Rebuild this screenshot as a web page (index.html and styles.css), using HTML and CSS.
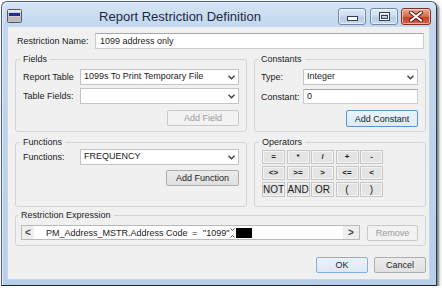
FILE: index.html
```html
<!DOCTYPE html>
<html lang="en">
<head>
    <meta charset="utf-8">
    <title>Report Restriction Definition</title>
    <link rel="stylesheet" href="styles.css">
</head>
<body>
    <div class="window">
        <div class="titlebar">
            <svg class="app-icon" width="15" height="14" viewBox="0 0 15 14">
                <rect x="0.5" y="0.5" width="14" height="13" rx="1" fill="#cfcfcf" stroke="#55595f"/>
                <rect x="1" y="1" width="13" height="2" fill="#e9e9e9"/>
                <rect x="2" y="4" width="11" height="3" fill="#1d2f9e"/>
                <rect x="1" y="8" width="13" height="5" fill="#bdbdbd"/>
            </svg>
            <div class="title">Report Restriction Definition</div>
            <div class="caption-buttons">
                <span class="cap-btn cap-min">
                    <svg width="11" height="5" viewBox="0 0 11 5"><rect x="0.5" y="0.5" width="10" height="4" fill="#ffffff" stroke="#2f405a"/></svg>
                </span>
                <span class="cap-btn cap-max">
                    <svg width="11" height="9" viewBox="0 0 11 9"><rect x="0.5" y="0.5" width="10" height="8" fill="none" stroke="#2f405a"/><rect x="1.5" y="1.5" width="8" height="6" fill="none" stroke="#ffffff"/><rect x="2.5" y="3.5" width="6" height="3" fill="none" stroke="#2f405a"/></svg>
                </span>
                <span class="cap-btn cap-close">
                    <svg width="14" height="11" viewBox="0 0 14 11"><path d="M2 1.5 L12 9.5 M12 1.5 L2 9.5" stroke="#4a1710" stroke-width="4" stroke-linecap="round"/><path d="M2 1.5 L12 9.5 M12 1.5 L2 9.5" stroke="#ffffff" stroke-width="2.2" stroke-linecap="round"/></svg>
                </span>
            </div>
        </div>

        <div class="client">
            <div class="name-row">
                <label>Restriction Name:</label>
                <div class="textbox name-box">1099 address only</div>
            </div>

            <div class="groups">
                <fieldset class="group fields-group">
                    <legend>Fields</legend>
                    <div class="form-row">
                        <label>Report Table</label>
                        <div class="combo">
                            <span>1099s To Print Temporary File</span>
                            <svg class="chev" width="7" height="5" viewBox="0 0 7 5"><path d="M0.5 0.8 L3.5 3.8 L6.5 0.8" fill="none" stroke="#3a3a3a" stroke-width="1.3"/></svg>
                        </div>
                    </div>
                    <div class="form-row">
                        <label>Table Fields:</label>
                        <div class="combo">
                            <span></span>
                            <svg class="chev" width="7" height="5" viewBox="0 0 7 5"><path d="M0.5 0.8 L3.5 3.8 L6.5 0.8" fill="none" stroke="#3a3a3a" stroke-width="1.3"/></svg>
                        </div>
                    </div>
                    <div class="btn-row">
                        <button class="btn disabled add-btn">Add Field</button>
                    </div>
                </fieldset>

                <fieldset class="group constants-group">
                    <legend>Constants</legend>
                    <div class="form-row">
                        <label>Type:</label>
                        <div class="combo">
                            <span>Integer</span>
                            <svg class="chev" width="7" height="5" viewBox="0 0 7 5"><path d="M0.5 0.8 L3.5 3.8 L6.5 0.8" fill="none" stroke="#3a3a3a" stroke-width="1.3"/></svg>
                        </div>
                    </div>
                    <div class="form-row">
                        <label>Constant:</label>
                        <div class="textbox const-box">0</div>
                    </div>
                    <div class="btn-row">
                        <button class="btn focused add-btn">Add Constant</button>
                    </div>
                </fieldset>

                <fieldset class="group functions-group">
                    <legend>Functions</legend>
                    <div class="form-row">
                        <label>Functions:</label>
                        <div class="combo">
                            <span>FREQUENCY</span>
                            <svg class="chev" width="7" height="5" viewBox="0 0 7 5"><path d="M0.5 0.8 L3.5 3.8 L6.5 0.8" fill="none" stroke="#3a3a3a" stroke-width="1.3"/></svg>
                        </div>
                    </div>
                    <div class="btn-row">
                        <button class="btn add-btn fn-btn">Add Function</button>
                    </div>
                </fieldset>

                <fieldset class="group operators-group">
                    <legend>Operators</legend>
                    <div class="op-grid">
                        <button class="op sym">=</button>
                        <button class="op sym">*</button>
                        <button class="op sym">/</button>
                        <button class="op sym">+</button>
                        <button class="op sym">-</button>
                        <button class="op sym">&lt;&gt;</button>
                        <button class="op sym">&gt;=</button>
                        <button class="op sym">&gt;</button>
                        <button class="op sym">&lt;=</button>
                        <button class="op sym">&lt;</button>
                        <button class="op">NOT</button>
                        <button class="op">AND</button>
                        <button class="op">OR</button>
                        <button class="op">(</button>
                        <button class="op">)</button>
                    </div>
                </fieldset>
            </div>

            <fieldset class="group expr-group">
                <legend>Restriction Expression</legend>
                <div class="expr-row">
                    <div class="expr-field">
                        <span class="scroll-arrow left">&lt;</span>
                        <div class="expr-text">
                            <span class="expr-col">PM_Address_MSTR.Address Code</span>
                            <span class="expr-op">=</span>
                            <span class="expr-val">"1099"</span>
                            <svg class="caret-mark" width="5" height="10" viewBox="0 0 5 10"><path d="M0.5 0.5 L2.5 2.5 L4.5 0.5 M0.5 9.5 L2.5 7.5 L4.5 9.5" fill="none" stroke="#555" stroke-width="1"/></svg>
                            <span class="expr-block"></span>
                        </div>
                        <span class="scroll-arrow right">&gt;</span>
                    </div>
                    <button class="btn disabled remove-btn">Remove</button>
                </div>
            </fieldset>

            <div class="dialog-buttons">
                <button class="btn default dlg-btn">OK</button>
                <button class="btn dlg-btn">Cancel</button>
            </div>
        </div>
    </div>
</body>
</html>
```

FILE: styles.css
```css
* {
    box-sizing: border-box;
}
body {
    margin: 0;
    background-color: #ffffff;
    font-family: "Liberation Sans", Arial, sans-serif;
    font-size: 9px;
    color: #1b1b1b;
}

/* window frame */
.window {
    width: 436px;
    height: 285px;
    margin: 1px 0 0 1px;
    padding: 0 6px 5px 5px;
    display: flex;
    flex-direction: column;
    border: 1px solid #4b5e78;
    border-right-color: #2a394d;
    border-bottom-color: #18212c;
    border-radius: 6px 6px 0 0;
    background: linear-gradient(#d5e4f5, #c2d7ee 24px, #b8cfe9);
    box-shadow: 2px 2px 3px rgba(0, 0, 0, 0.55), inset 1px 1px 0 #e6eff9;
}
.titlebar {
    height: 24px;
    flex-shrink: 0;
    display: flex;
}
.app-icon {
    margin: 7px 0 0 0;
}
.title {
    flex: 1;
    text-align: center;
    padding-top: 7px;
    font-size: 13px;
    line-height: 15px;
    color: #1c2a3c;
}
.caption-buttons {
    display: flex;
    margin: 6px -1px 0 0;
}
.cap-btn {
    width: 28px;
    height: 17px;
    display: flex;
    align-items: center;
    justify-content: center;
    border: 1px solid #7088a8;
    border-radius: 3px;
    background: linear-gradient(#e2ecf7, #c9daef 50%, #b3c9e4 51%, #c8daee);
    box-shadow: inset 0 0 0 1px rgba(255, 255, 255, 0.55);
}
.cap-min svg {
    margin-top: 4px;
}
.cap-max {
    margin-left: 4px;
}
.cap-close {
    width: 30px;
    margin-left: 3px;
    border-color: #80301f;
    background: linear-gradient(#eba996, #d76a51 50%, #c53c22 51%, #d4654c);
}

/* client area */
.client {
    flex: 1;
    display: flex;
    flex-direction: column;
    padding: 6px 3px 0 7px;
    background-color: #f0f0f0;
    border: 1px solid #c7d6e8;
}
.name-row {
    display: flex;
    align-items: center;
    height: 16px;
    margin-bottom: 5px;
}
.name-row label {
    width: 80px;
    padding-left: 2px;
}
.textbox {
    height: 16px;
    padding: 0 4px;
    line-height: 14px;
    background-color: #ffffff;
    border: 1px solid #c9ccd0;
    border-top-color: #a3a7ac;
}
.name-box {
    width: 329px;
}

.groups {
    display: grid;
    grid-template-columns: 232px 172px;
    column-gap: 7px;
    row-gap: 5px;
}
.group {
    margin: 0;
    min-width: 0;
    padding: 4px 7px 5px 7px;
    border: 1px solid #d0d4d8;
    border-radius: 3px;
}
.group legend {
    margin-left: -3px;
    padding: 0 3px;
    line-height: 11px;
}
.form-row {
    display: flex;
    align-items: center;
}
.form-row + .form-row {
    margin-top: 3px;
}
.fields-group label {
    width: 57px;
}
.combo {
    flex: 1;
    height: 16px;
    display: flex;
    align-items: center;
    justify-content: space-between;
    padding: 0 3px 0 3px;
    background-color: #ffffff;
    border: 1px solid #c2c4c7;
}
.combo span {
    margin-top: -2px;
}
.chev {
    margin-top: 1px;
}
.btn-row {
    display: flex;
    justify-content: flex-end;
    margin-top: 6px;
}

/* buttons */
.btn {
    height: 16px;
    padding: 0;
    font: inherit;
    color: #1b1b1b;
    background: linear-gradient(#ececec, #e0e0e0);
    border: 1px solid #adadad;
    border-radius: 2px;
}
.btn.focused {
    background: linear-gradient(#eaf4fc, #dbecf9);
    border-color: #5b93c9;
}
.btn.default {
    background: linear-gradient(#eaf1f8, #dfe9f3);
    border-color: #7eb2e4;
}
.btn.disabled {
    color: #9a9a9a;
    background: #f2f2f2;
    border-color: #c8c8c8;
}
.add-btn {
    width: 72px;
}
.fn-btn {
    width: 73px;
}

.constants-group {
    padding: 4px 7px 4px 6px;
}
.constants-group label {
    width: 42px;
}
.constants-group .form-row + .form-row {
    margin-top: 4px;
}
.const-box {
    flex: 1;
    height: 15px;
    line-height: 12px;
    padding-left: 3px;
}
.constants-group .btn {
    height: 17px;
}

.functions-group {
    padding: 1px 7px 20px 7px;
}
.functions-group label {
    width: 57px;
}
.functions-group .btn-row {
    margin-top: 5px;
}

.operators-group {
    padding: 2px 7px 4px 7px;
}
.op-grid {
    display: grid;
    grid-template-columns: repeat(5, 23px);
    grid-template-rows: 14px 14px 15px;
    column-gap: 1.5px;
    row-gap: 2px;
}
.op {
    padding: 0;
    font: inherit;
    font-size: 10px;
    line-height: 12px;
    color: #1b1b1b;
    background-color: #e4e4e4;
    border: 1px solid #c6c6c6;
    box-shadow: inset 0 0 0 1px #f4f4f4;
}
.op.sym {
    font-size: 8px;
    font-weight: bold;
}

/* expression */
.expr-group {
    margin-top: 3px;
    padding: 4px 7px 4px 5px;
}
.expr-row {
    display: flex;
    align-items: flex-start;
    gap: 7px;
}
.expr-field {
    width: 339px;
    height: 15px;
    display: flex;
    background-color: #ffffff;
    border: 1px solid #b9b9b9;
}
.scroll-arrow {
    display: flex;
    align-items: center;
    justify-content: center;
    font-size: 10px;
    font-weight: bold;
    color: #444444;
    background-color: #eeeeee;
}
.scroll-arrow.left {
    width: 12px;
}
.scroll-arrow.right {
    width: 16px;
}
.expr-text {
    flex: 1;
    display: flex;
    align-items: center;
    padding-left: 12px;
    white-space: nowrap;
    overflow: hidden;
}
.expr-col {
    width: 146px;
}
.expr-op {
    width: 11px;
}
.expr-val {
    width: 27px;
}
.caret-mark {
    margin-top: 1px;
}
.expr-block {
    width: 16px;
    height: 10px;
    margin-left: 1px;
    background-color: #000000;
}
.remove-btn {
    width: 51px;
}

.dialog-buttons {
    display: flex;
    justify-content: flex-end;
    gap: 6px;
    margin-top: 11px;
}
.dlg-btn {
    width: 52px;
}
```
